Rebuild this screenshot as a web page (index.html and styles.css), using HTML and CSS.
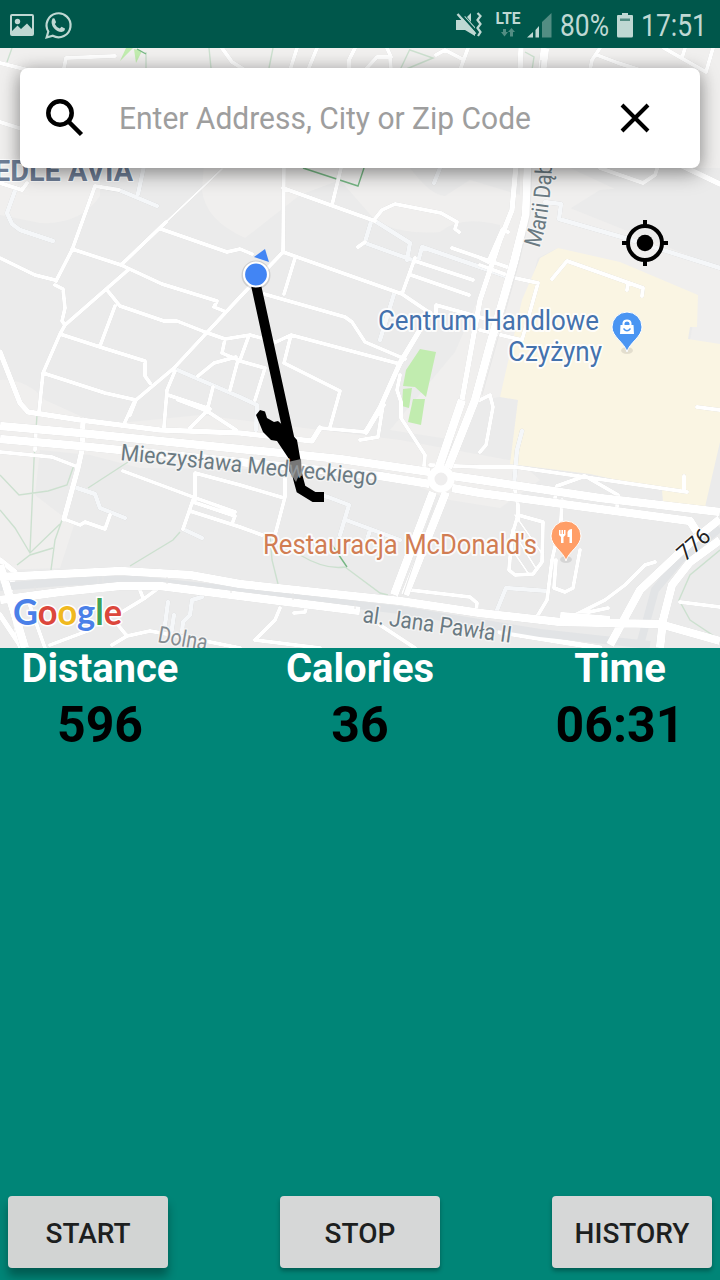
FILE: index.html
```html
<!DOCTYPE html>
<html lang="en">
<head>
<meta charset="utf-8">
<title>Run tracker</title>
<link rel="stylesheet" href="styles.css">
</head>
<body>
<div class="app">
  <header class="status">
    <div class="status-left">
      <svg width="24" height="22" viewBox="0 0 24 22"><path fill-rule="evenodd" d="M2 0H22Q24 0 24 2V20Q24 22 22 22H2Q0 22 0 20V2Q0 0 2 0ZM2 2V17L7.500 11.500L11 15L17 9.500L22 15V2Z"/><circle cx="7.500" cy="7.500" r="2.700"/></svg>
      <svg width="28" height="29" viewBox="0 0 28 29"><path class="outline" d="M2.600 26.500L4.300 20.500A12 12 0 1 1 8.800 24.800Z"/><path d="M8.500 7.500Q9.500 6.800 10.500 7.500L12 11Q12 12 10.800 13Q12.500 16.500 15.800 17.500L17.500 15.800L21 17.500Q21 20.500 17.500 21Q13 20.800 10 17.300Q6 12.500 8.500 7.500Z"/></svg>
    </div>
    <div class="status-right">
      <svg width="26" height="26" viewBox="0 0 26 26"><path d="M0 8H5L9 4L19 15V24L9 18H0ZM11 5L15 1V10Z"/><path class="slash" d="M3.500 1L21 20.500"/><path class="strike" d="M1.500 2L19.500 22"/><path class="outline" d="M21.500 1L24.500 4L21.500 8L24.500 12L21.500 16L24.500 20L22 24"/></svg>
      <svg class="lte" width="26" height="28" viewBox="0 0 26 28"><text class="lte-text" x="0.500" y="13" textLength="25" lengthAdjust="spacingAndGlyphs">LTE</text><path class="dim" d="M8 18H11V21H13L9.500 25.500L6 21H8ZM15 25.500V21H13L16.500 17L20 21H18V25.500Z"/></svg>
      <svg class="signal" width="25" height="25" viewBox="0 0 25 25"><path class="dim" d="M15 9L24.500 0V24.500H15Z"/><path d="M0 24.500L6 19V24.500ZM8.500 17L12 13V24.500H8.500Z"/></svg>
      <svg class="percent" width="50" height="38" viewBox="0 0 50 38"><text class="status-text" x="0" y="30" textLength="49" lengthAdjust="spacingAndGlyphs">80%</text></svg>
      <svg class="battery" width="16" height="25" viewBox="0 0 16 25"><path d="M5 0H11V2H15Q16 2 16 3V23Q16 24.500 14.500 24.500H1.500Q0 24.500 0 23V3Q0 2 1 2H5Z"/><path class="level" d="M3 5.500H13V8H3Z"/></svg>
      <svg class="clock" width="68" height="38" viewBox="0 0 68 38"><text class="status-text" x="0" y="30" textLength="66" lengthAdjust="spacingAndGlyphs">17:51</text></svg>
    </div>
  </header>

  <main class="map">
    <svg class="map-art" width="720" height="600" viewBox="0 48 720 600">
      <rect class="land" y="48" width="720" height="600"/>
      <path class="land-light" d="M0 48H720V180L600 190L560 215L540 250L500 397L480 400L455 440L390 430L440 370L455 352L500 250L500 225Q460 215 440 232Q400 235 375 220L340 180L300 195L245 238Q205 220 202 190L205 150L100 150L100 196Q80 225 40 223L0 215Z"/>
      <path class="land-light" d="M0 380Q25 378 45 400L100 425L200 415L400 440L520 462L540 480L500 508L450 500L380 470L140 468L90 455L40 450L35 495L74 525L60 568L0 570Z"/>
      <path class="land" d="M410 168Q430 195 445 196L470 180L520 195V168ZM570 168L720 238V168Z"/>
      <path class="land-light" d="M520 200L560 204L720 268V345L690 340L698 295L558 248L530 262Z"/>
      <path class="mall" d="M558 248L620 262L698 295L697 327H690L688 339L720 344V442L705 507L663 502L662 490L590 474L510 464L518 400L500 397L522 300L540 258Z"/>
      <path class="park" d="M420 349L436 352L426 397L415 387L403 386L406 370ZM403 389L412 388L409 408L402 406ZM413 399L425 399L421 425L408 422ZM120 61L126 48H133ZM134 49L136 63L142 51Z"/>

      <g class="trail">
        <path d="M37 415L34 460L30 552M0 475L19 495L48 491L67 485L74 465M0 510L15 528L30 553L60 524M17 565L30 555L53 548M62 520L55 540L51 570M88 488L128 462M180 532L173 540L130 566"/>
        <path d="M270 535L272 560L278 584M300 555Q325 570 345 567M345 567L380 593L388 595M720 550L690 575L679 600L690 620L720 640M12 48L7 62M146 52V68M209 48L211 68M273 48L269 68M410 49L400 70M410 50L433 58L404 70M525 52L534 57L532 70"/>
        <path class="trail-dark" d="M303 168L358 186L364 168M332 545L347 567M137 49L146 54"/>
      </g>

      <g class="light-roads">
        <path d="M16 188L7 213L12 224L20 230L53 241M108 188L119 190L157 206M144 166L138 194M175 369L240 397L257 405L256 430M375 221L410 243L407 260M371 222L365 242M365 243L415 261M418 262L422 247L480 267L505 276M394 294L380 340M77 488L95 494L100 508L125 518M168 602L165 625M174 615L171 635M202 597L192 600L190 615L183 622L182 632M183 529L202 538M300 490L328 497L349 505L340 535M346 520L400 540M370 530L367 540M522 431L517 450L514 485M545 202L561 204L559 219L625 238L720 268M497 610L506 588L548 591M440 168L434 183"/>
      </g>

      <g class="roads edge">
        <path d="M95 186L72 250L56 281M0 258L35 275L55 280M55 285L63 289L65 308L62 321L65 325M95 186L119 190M72 249L121 265L162 284L217 301L214 307L224 311M166 222L121 265M161 229L227 252L240 249L252 254M128 270L65 325L60 334L43 373L39 412M107 290L120 306L164 321L177 321L205 332L225 339L250 335L276 342L291 335L400 364M115 306L100 346M60 334L100 347L145 361V376L150 383M43 373L105 393L136 400M283 252L240 297L174 368L136 400L130 415M225 339L222 353L236 359M236 357L214 363L198 376M238 360L230 390M175 371L167 390L164 427M168 395L210 409M213 387L207 411L190 428M284 160L283 252M341 168L332 205M374 220L382 210L395 204L441 213L457 222L455 229L459 232M365 242L358 247M415 261L473 280M411 275L469 295M452 248L510 268M415 258L402 294M283 188L333 206L375 221M283 252L402 294L430 313M295 258L284 294M264 294L345 317L352 322L365 342L405 359M436 314V305L490 320M291 335L284 363L340 391L330 427M265 368L240 361M265 368L255 400M248 338L240 360M400 375L397 390L401 402V418L425 455L424 466M480 258L488 262L502 230L508 232M480 265L515 278L538 283L522 340L480 330M552 279L567 261L643 288L642 296M628 284L627 290M600 168L643 183L655 175L658 166M0 183L22 190L27 183M0 452L52 457L78 467M64 519L80 525L85 522L105 529L110 515M123 471L193 497L235 512M195 500L195 473L240 485L284 498M193 500L183 529M193 502L235 516L232 524M190 511L240 527L262 535M135 400L125 422M178 400L207 411L236 430M320 428L365 432L384 405M383 405L378 437L360 440M285 475V497L275 535M35 450L36 430M480 400L490 395L493 407L486 445L480 452M430 465L480 467H515L585 477L687 492M684 476V490M555 498L557 486L585 476L618 495L617 507M697 407L720 410M514 485L518 505V520M562 500L561 520L552 560L547 600L538 615M556 560L554 588L565 592L573 588L580 550M655 562L645 565L625 585L605 600L575 615L608 608M680 602L720 607M410 590L470 597L477 603L476 612M280 608L275 620L255 640L320 648M307 605L305 612L294 613M380 625L415 648M122 612L145 598L160 587M140 590L143 598M50 645L90 630M118 625L127 636L112 645M127 636L150 631L200 640L240 648M10 600L20 648M28 600L45 648"/>
        <path d="M222 48L232 62L248 72M297 48L290 70M317 48L308 70M355 48L349 60V70M365 70L377 57H390L391 70M387 48L391 57M436 55L445 50L462 59M468 48L460 70M600 48L592 60L590 70M597 55L618 63L640 70M664 48L690 63L706 72M713 48L706 72M685 48L682 58M0 63L28 70M64 68L66 58L115 56M0 122L22 129"/>
        <path d="M518 515L543 522L542 562L533 574L515 575L509 570L512 535Z"/>
        <path class="hair" d="M222 169L166 222M515 515L543 555M512 530L537 570M511 548L528 573"/>
        <path class="mid" d="M0 352L20 403L28 412L80 420L160 430L240 433L312 441L320 428M430 313L400 363L380 408L366 432M83 420L82 450L78 468L64 519M521 48L516 165L512 210L500 240L480 300L462 400M680 165L720 184M0 615L22 648M0 560L15 572L8 600M500 632L600 648"/>
      </g>
      <g class="rail"><path d="M0 587L60 582L130 579L240 591L400 610L540 633L650 645M720 528L680 560L655 590L640 645"/></g>
      <g class="major">
        <path d="M545 48L536 120L528 160L526 215L514 262L490 345L475 400L448 468M462 400L438 470M433 492L394 595M446 492L405 595M0 426L80 433L240 449L340 459L430 472M0 439L80 446L240 462L380 476L430 484M452 476L480 480L600 498L720 512M452 488L480 493L600 509L690 521L697 532M0 577L40 575L120 571L190 575L240 584L400 601L480 613L560 622L660 624L720 641M0 600L60 592L120 586L160 586L240 596L360 611M720 519L690 543L640 590L610 645M720 540L690 562L672 585L663 620L660 648M0 565L25 648M560 616L610 620"/>
      </g>
      <g class="seams"><path d="M541 60L532 160L530 215L519 262L482 395M434 505L403 595M35 586V591M98 576V583M103 576V583M167 577V584M231 587V593M293 593V600M355 602V609"/></g>
      <circle class="roundabout" cx="441" cy="479" r="10"/>

      <g class="route">
        <path class="route-line" d="M256 285L298 478L301 489L314 497H324"/>
        <path class="route-blob" d="M256 415L260 410L265 411.500L267 418L274 422L278 421L286 428L297 440L301 463L297 472L289 459L285 453L277 441L271 440L263 432Z"/>
        <path class="route-fade" d="M288 462L301 459L302 476L299 475L296 482L292 476L289 471Z"/>
      </g>

      <g class="labels">
        <text class="poi-blue" x="378" y="330" textLength="221" lengthAdjust="spacingAndGlyphs">Centrum Handlowe</text>
        <text class="poi-blue" x="508" y="361" textLength="94" lengthAdjust="spacingAndGlyphs">Czyżyny</text>
        <text class="poi-orange" x="263" y="554" textLength="274" lengthAdjust="spacingAndGlyphs">Restauracja McDonald's</text>
        <text class="district" x="-6" y="181" textLength="139" lengthAdjust="spacingAndGlyphs">EDLE AVIA</text>
        <text class="street" transform="translate(120 460) rotate(5.800)" textLength="169" lengthAdjust="spacingAndGlyphs">Mieczysława Med</text>
        <text class="street no-halo" transform="translate(288 476.500) rotate(5.800)" textLength="16" lengthAdjust="spacingAndGlyphs">w</text>
        <text class="street" transform="translate(303 478) rotate(5.800)" textLength="74" lengthAdjust="spacingAndGlyphs">eckiego</text>
        <text class="street" transform="translate(362 622) rotate(8)" textLength="150" lengthAdjust="spacingAndGlyphs">al. Jana Pawła II</text>
        <text class="street faded" transform="translate(157 642) rotate(10)" textLength="50" lengthAdjust="spacingAndGlyphs">Dolna</text>
        <path id="marii" class="guide" d="M539 248Q552 215 553 130"/>
        <text class="street"><textPath href="#marii" textLength="86" lengthAdjust="spacingAndGlyphs">Marii Dąb</textPath></text>
        <text class="road-number" transform="translate(685 562) rotate(-41)" textLength="36" lengthAdjust="spacingAndGlyphs">776</text>
      </g>

      <g class="pins">
        <ellipse class="pin-shadow" cx="627" cy="350.500" rx="6" ry="3.500"/>
        <path class="pin-blue" d="M627 352C625 343 612 337 612 327A15 15 0 0 1 642 327C642 337 629 343 627 352Z"/>
        <path class="pin-icon" d="M620.500 325H633.500L634 334H620Z"/><path class="pin-handle" d="M623.500 325.500V323Q624 320.500 627 320.500T630.500 323V325.500"/><path class="pin-smile" d="M623.500 328.500Q627 333 630.500 328.500"/>
        <ellipse class="pin-shadow" cx="566" cy="559.500" rx="6" ry="3.500"/>
        <path class="pin-orange" d="M566 561C564 552 551 546 551 536A15 15 0 0 1 581 536C581 546 568 552 566 561Z"/>
        <path class="pin-icon" d="M559 530H560.500V534H561.500V530H563V534H564V530H565.500V535L563.500 537V543H561V537L559 535ZM572 529V543H569.500V537H567.500V532Q568.500 529 572 529Z"/>
      </g>

      <path class="heading" d="M254 257L265 249L269 262Z"/>
      <circle class="me-shadow" cx="256" cy="275" r="14.500"/>
      <circle class="me" cx="256" cy="274.500" r="12"/>

      <g class="locate"><circle class="ring" cx="645" cy="243" r="17"/><circle cx="645" cy="243" r="8.300"/><path class="ring" d="M645 220V228M645 258V266M622 243H630M660 243H668"/></g>

      <g class="logo"><text x="13" y="624.500" textLength="109" lengthAdjust="spacingAndGlyphs"><tspan class="g-blue">G</tspan><tspan class="g-red">o</tspan><tspan class="g-yellow">o</tspan><tspan class="g-blue">g</tspan><tspan class="g-green">l</tspan><tspan class="g-red">e</tspan></text></g>
    </svg>
    <div class="search">
      <svg width="38" height="38" viewBox="0 0 38 38"><circle class="search-icon" cx="14" cy="14" r="11.700"/><path class="search-icon" d="M22.500 22.500L35.500 35.500"/></svg>
      <svg class="placeholder" width="416" height="40" viewBox="0 0 416 40"><text x="0" y="31" textLength="412" lengthAdjust="spacingAndGlyphs">Enter Address, City or Zip Code</text></svg>
      <svg class="close" width="30" height="30" viewBox="0 0 30 30"><path d="M2 2L28 28M28 2L2 28"/></svg>
    </div>
  </main>

  <section class="stats">
    <div class="stat"><div class="stat-name">Distance</div><div class="stat-value">596</div></div>
    <div class="stat"><div class="stat-name">Calories</div><div class="stat-value">36</div></div>
    <div class="stat"><div class="stat-name">Time</div><div class="stat-value">06:31</div></div>
  </section>

  <footer class="actions">
    <button class="btn raised">START</button>
    <button class="btn">STOP</button>
    <button class="btn">HISTORY</button>
  </footer>
</div>
</body>
</html>
```
FILE: styles.css
```css
* { box-sizing: border-box; }
body { margin: 0; font-family: Roboto, "Noto Sans", sans-serif; }
svg { display: block; flex: none; }
.app { width: 720px; height: 1280px; background: #008577; display: flex; flex-direction: column; overflow: hidden; }

.status { height: 48px; flex: none; background: #00574b; display: flex; justify-content: space-between; padding: 0 11px 0 10px; fill: #bfd8d3; }
.status svg { overflow: visible; }
.status-left, .status-right { display: flex; align-items: center; }
.status-left { gap: 10px; padding-top: 2px; }
.status-right { padding-top: 2px; }
.status .outline { fill: none; stroke: #bfd8d3; stroke-width: 2.2; }
.status .slash { stroke: #00574b; stroke-width: 2.4; }
.status .strike { stroke: #bfd8d3; stroke-width: 2.4; }
.status .dim { fill: #528d83; }
.status .level { fill: #528d83; }
.lte { margin-left: 13px; }
.signal { margin-left: 6px; }
.percent { margin-left: 8px; }
.battery { margin-left: 7px; }
.clock { margin-left: 8px; }
.status-text { font-size: 31px; }
.lte-text { font-size: 16px; font-weight: 700; }

.map { width: 720px; height: 600px; flex: none; display: grid; overflow: hidden; }
.map > * { grid-area: 1 / 1; }
.land { fill: #ebebeb; }
.land-light { fill: #f0efee; }
.mall { fill: #faf5e3; }
.park { fill: #c1ecaf; }
.trail { fill: none; stroke: #cce0cf; stroke-width: 1.4; }
.trail-dark { stroke: #76b784; }
.light-roads { fill: none; stroke: #f5f7f9; stroke-width: 4.5; stroke-linejoin: round; stroke-linecap: round; }
.roads { fill: none; stroke: #fff; stroke-width: 4; stroke-linejoin: round; stroke-linecap: round; }
.edge, .major, .light-roads { filter: drop-shadow(0 0 0.6px rgba(0, 0, 0, 0.16)); }
.roads .hair { stroke-width: 2; }
.roads .mid { stroke-width: 5.5; }
.rail { fill: none; stroke: #e2e4e6; stroke-width: 8; }
.major { fill: none; stroke: #fff; stroke-width: 8.5; stroke-linejoin: round; }
.seams { fill: none; stroke: #e6e6e6; stroke-width: 1; }
.roundabout { fill: #efeeee; stroke: #fff; stroke-width: 7; }
.route-line { fill: none; stroke: #000; stroke-width: 10; }
.route-fade { fill: #777; }
.guide { fill: none; }
.labels text { stroke: rgba(255, 255, 255, 0.85); stroke-width: 4; stroke-linejoin: round; paint-order: stroke; }
.labels .poi-blue { font-size: 28px; fill: #4472ad; }
.labels .poi-orange { font-size: 28px; fill: #d17d53; }
.labels .district { font-size: 29px; font-weight: 700; fill: #6f7f97; stroke-width: 2; }
.labels .street { font-size: 23px; fill: #6a7a82; stroke: rgba(245, 245, 245, 0.9); stroke-width: 3; }
.labels .no-halo { stroke: none; fill: #92989c; }
.labels .faded { fill: #858d92; }
.labels .road-number { font-size: 22px; fill: #222; stroke-width: 2; }
.pin-shadow { fill: rgba(0, 0, 0, 0.09); }
.pin-blue { fill: #4a95f2; stroke: #fff; stroke-width: 1; }
.pin-orange { fill: #ff9e67; stroke: #fff; stroke-width: 1; }
.pin-icon { fill: #fff; }
.pin-handle { fill: none; stroke: #fff; stroke-width: 2; }
.pin-smile { fill: none; stroke: #4a95f2; stroke-width: 1.3; }
.heading { fill: #4285f4; }
.me-shadow { fill: rgba(0, 0, 0, 0.12); }
.me { fill: #4285f4; stroke: #fff; stroke-width: 2.2; }
.ring { fill: none; stroke: #000; stroke-width: 4; }
.logo { font-family: Lato, Roboto, sans-serif; font-size: 36px; font-weight: 700; }
.logo text { stroke: #fff; stroke-width: 3; paint-order: stroke; }
.g-blue { fill: #4a80e8; }
.g-red { fill: #dc473c; }
.g-yellow { fill: #f0b91f; }
.g-green { fill: #3fa257; }

.search { align-self: start; margin: 20px 20px 0; height: 100px; background: #fff; border-radius: 8px; display: flex; align-items: center; padding: 0 50px 0 26px; box-shadow: 0 6px 20px rgba(0, 0, 0, 0.36), 0 0 16px rgba(0, 0, 0, 0.14); }
.search-icon { fill: none; stroke: #000; stroke-width: 4.5; }
.placeholder { margin-left: 35px; font-size: 30.5px; fill: #9e9e9e; }
.close { margin-left: auto; stroke: #000; stroke-width: 4; }

.stats { flex: 1; display: flex; justify-content: space-between; }
.stat { width: 200px; text-align: center; font-weight: 700; }
.stat-name { font-size: 40px; line-height: 42px; color: #fff; }
.stat-value { font-size: 50px; line-height: 70px; color: #000; }

.actions { display: flex; justify-content: space-between; padding: 0 8px 12px; }
.btn { width: 160px; height: 72px; padding: 2px 0 0; border: 0; border-radius: 4px; background: #d6d7d7; color: #1d1f1f; font: 500 28px Roboto, sans-serif; box-shadow: 0 3px 4px rgba(0, 0, 0, 0.3); }
.raised { background: #d2d4d3; box-shadow: 0 8px 10px rgba(0, 0, 0, 0.32); }
```
